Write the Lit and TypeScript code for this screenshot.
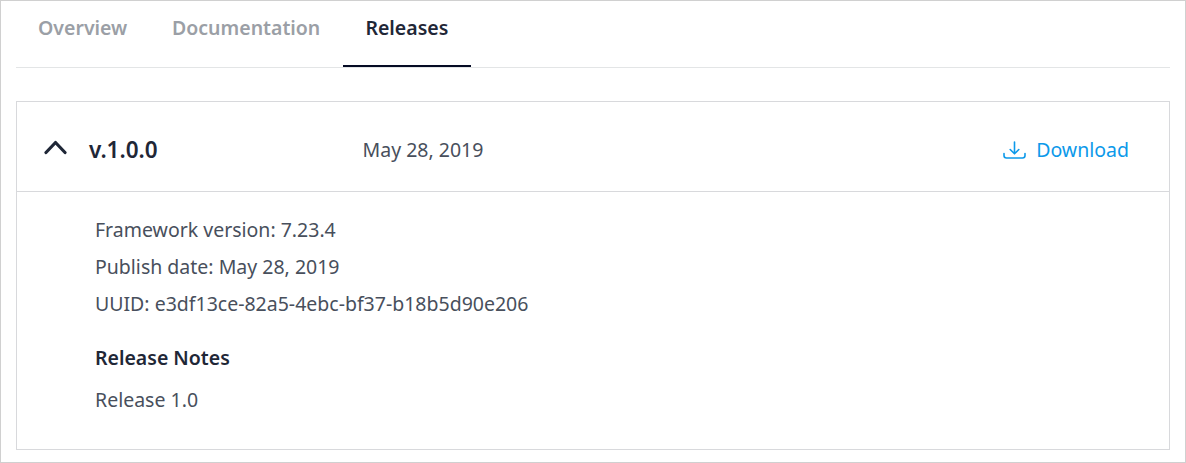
import { LitElement, html, css } from "lit";
import { customElement } from "lit/decorators.js";

@customElement("app-root")
export class AppRoot extends LitElement {
  static styles = css`
    :host { display: block; box-sizing: border-box; height: 463px; padding: 0 15px; border: 1px solid #d0d0d0; background: #fff; font-family: "Noto Sans", sans-serif; font-size: 19.5px; line-height: 26px; color: #484f5c; }
    * { box-sizing: border-box; }
    .tabs { display: flex; height: 67px; border-bottom: 1px solid #e3e5e6; font-weight: 600; color: #9b9fa6; }
    .tab { height: 66px; padding: 14px 22.7px 0 22px; white-space: nowrap; }
    .active { padding-left: 22.4px; color: #1f2737; border-bottom: 2px solid #050b24; }
    .card { margin-top: 33px; height: 349px; border: 1px solid #d8d9dc; }
    .head { display: flex; align-items: center; height: 90px; padding: 6px 40px 0 27px; border-bottom: 1px solid #d8d9dc; }
    .chevron { display: block; width: 23px; height: 16px; margin: 0 22px 5px 0; }
    .version { width: 273.5px; padding-top: 1px; font-size: 22.5px; font-weight: 600; color: #1f2737; }
    .download { display: flex; align-items: center; margin-left: auto; color: #0c99ea; }
    .download svg { margin-right: 10.4px; }
    .body { padding: 19px 78px; }
    .row { height: 37px; padding-top: 6px; }
    .title { margin-top: 23px; font-weight: 600; color: #1f2737; }
    .notes { margin-top: 16px; }
  `;
  render() {
    return html`
      <nav class="tabs"><div class="tab">Overview</div><div class="tab">Documentation</div><div class="tab active">Releases</div></nav>
      <section class="card">
        <div class="head">
          <svg class="chevron" viewBox="0 0 23 16" fill="none" stroke="#1f2737" stroke-width="3.200" stroke-linecap="round" stroke-linejoin="round"><path d="M2 13.500 11.500 3.500 21 13.500"/></svg>
          <div class="version">v.1.0.0</div><div>May 28, 2019</div>
          <div class="download"><svg width="23" height="18" viewBox="0 0 23 18" fill="none" stroke="#0c99ea" stroke-width="1.600" stroke-linecap="round" stroke-linejoin="round"><path d="M1 12.500v2q0 2.500 2.500 2.500h16q2.500 0 2.500-2.500v-2M11.500 1v11.500M7.200 8.500l4.300 4.300 4.300-4.300"/></svg>Download</div>
        </div>
        <div class="body">
          <div class="row">Framework version: 7.23.4</div><div class="row">Publish date: May 28, 2019</div><div class="row">UUID: e3df13ce-82a5-4ebc-bf37-b18b5d90e206</div>
          <div class="title">Release Notes</div><div class="notes">Release 1.0</div>
        </div>
      </section>`;
  }
}
